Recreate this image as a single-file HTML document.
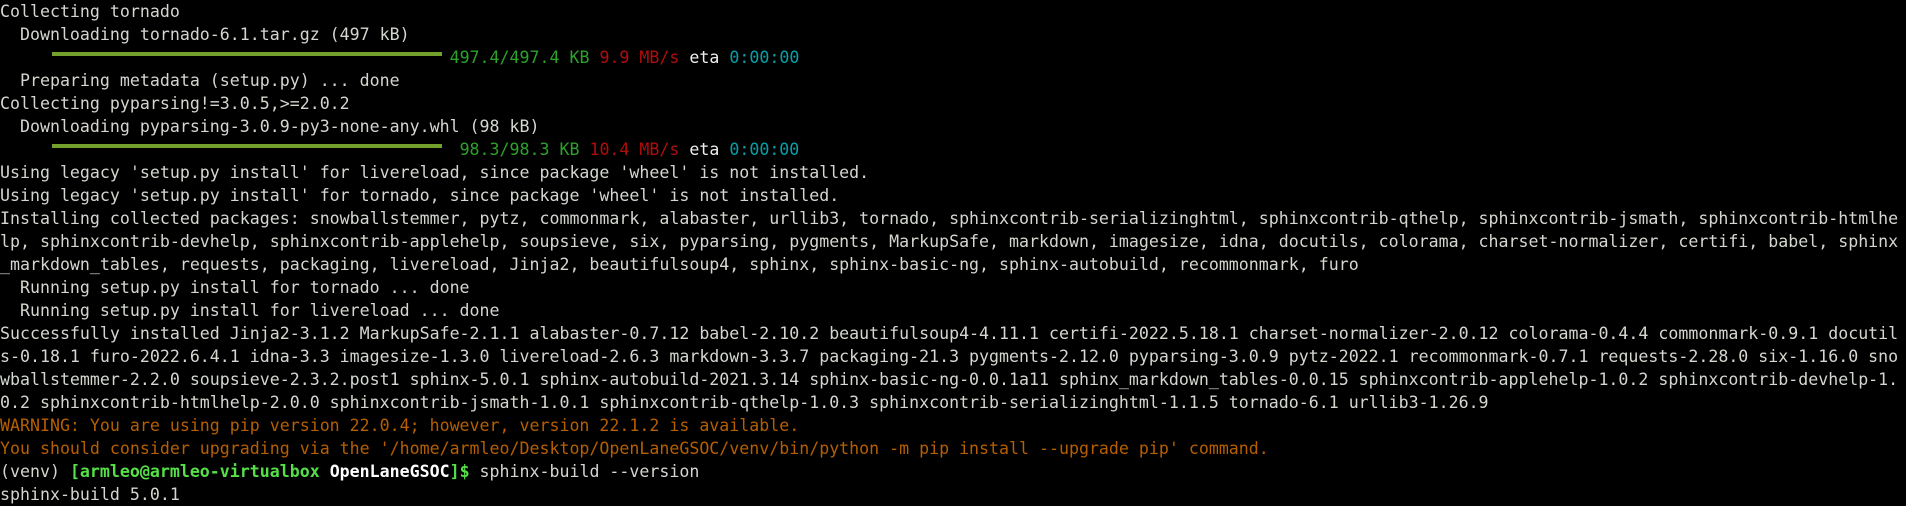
<!DOCTYPE html>
<html><head><meta charset="utf-8"><style>
html,body{margin:0;padding:0;background:#000;width:1906px;height:506px;overflow:hidden}
pre{margin:0;padding:0 0 0 0;font-family:"DejaVu Sans Mono","Liberation Mono",monospace;font-size:16.6px;line-height:23px;color:#d3d7cf;white-space:pre;position:relative}
.g{color:#2ca12c}.r{color:#b00d0d}.c{color:#06a0a8}.w{color:#eeeeec}
.o{color:#b65f00}.pg{color:#55e048;font-weight:bold}.pw{color:#fff;font-weight:bold}
.bar{position:absolute;left:52px;width:390px;height:4px;background:#73a12b}
</style></head><body><pre><div class="bar" style="top:52px"></div><div class="bar" style="top:144px"></div>Collecting tornado
  Downloading tornado-6.1.tar.gz (497 kB)
                                             <span class="g">497.4/497.4 KB</span> <span class="r">9.9 MB/s</span> <span class="w">eta</span> <span class="c">0:00:00</span>
  Preparing metadata (setup.py) ... done
Collecting pyparsing!=3.0.5,>=2.0.2
  Downloading pyparsing-3.0.9-py3-none-any.whl (98 kB)
                                              <span class="g">98.3/98.3 KB</span> <span class="r">10.4 MB/s</span> <span class="w">eta</span> <span class="c">0:00:00</span>
Using legacy 'setup.py install' for livereload, since package 'wheel' is not installed.
Using legacy 'setup.py install' for tornado, since package 'wheel' is not installed.
Installing collected packages: snowballstemmer, pytz, commonmark, alabaster, urllib3, tornado, sphinxcontrib-serializinghtml, sphinxcontrib-qthelp, sphinxcontrib-jsmath, sphinxcontrib-htmlhe
lp, sphinxcontrib-devhelp, sphinxcontrib-applehelp, soupsieve, six, pyparsing, pygments, MarkupSafe, markdown, imagesize, idna, docutils, colorama, charset-normalizer, certifi, babel, sphinx
_markdown_tables, requests, packaging, livereload, Jinja2, beautifulsoup4, sphinx, sphinx-basic-ng, sphinx-autobuild, recommonmark, furo
  Running setup.py install for tornado ... done
  Running setup.py install for livereload ... done
Successfully installed Jinja2-3.1.2 MarkupSafe-2.1.1 alabaster-0.7.12 babel-2.10.2 beautifulsoup4-4.11.1 certifi-2022.5.18.1 charset-normalizer-2.0.12 colorama-0.4.4 commonmark-0.9.1 docutil
s-0.18.1 furo-2022.6.4.1 idna-3.3 imagesize-1.3.0 livereload-2.6.3 markdown-3.3.7 packaging-21.3 pygments-2.12.0 pyparsing-3.0.9 pytz-2022.1 recommonmark-0.7.1 requests-2.28.0 six-1.16.0 sno
wballstemmer-2.2.0 soupsieve-2.3.2.post1 sphinx-5.0.1 sphinx-autobuild-2021.3.14 sphinx-basic-ng-0.0.1a11 sphinx_markdown_tables-0.0.15 sphinxcontrib-applehelp-1.0.2 sphinxcontrib-devhelp-1.
0.2 sphinxcontrib-htmlhelp-2.0.0 sphinxcontrib-jsmath-1.0.1 sphinxcontrib-qthelp-1.0.3 sphinxcontrib-serializinghtml-1.1.5 tornado-6.1 urllib3-1.26.9
<span class="o">WARNING: You are using pip version 22.0.4; however, version 22.1.2 is available.</span>
<span class="o">You should consider upgrading via the '/home/armleo/Desktop/OpenLaneGSOC/venv/bin/python -m pip install --upgrade pip' command.</span>
(venv) <span class="pg">[armleo@armleo-virtualbox </span><span class="pw">OpenLaneGSOC</span><span class="pg">]$</span> sphinx-build --version
sphinx-build 5.0.1</pre></body></html>
